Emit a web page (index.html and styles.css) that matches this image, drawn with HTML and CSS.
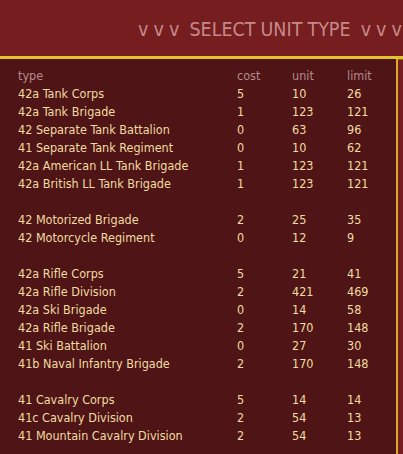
FILE: index.html
```html
<!DOCTYPE html>
<html>
<head>
<meta charset="utf-8">
<link rel="stylesheet" href="styles.css">
</head>
<body>
<div class="top">
  <div class="title">v v v&nbsp;&nbsp;SELECT UNIT TYPE&nbsp;&nbsp;v v v</div>
</div>
<div class="panel">
  <div class="grid">
    <div class="hd">type</div><div class="hd">cost</div><div class="hd">unit</div><div class="hd">limit</div>
    <div>42a Tank Corps</div><div>5</div><div>10</div><div>26</div>
    <div>42a Tank Brigade</div><div>1</div><div>123</div><div>121</div>
    <div>42 Separate Tank Battalion</div><div>0</div><div>63</div><div>96</div>
    <div>41 Separate Tank Regiment</div><div>0</div><div>10</div><div>62</div>
    <div>42a American LL Tank Brigade</div><div>1</div><div>123</div><div>121</div>
    <div>42a British LL Tank Brigade</div><div>1</div><div>123</div><div>121</div>
    <div class="gap"></div>
    <div>42 Motorized Brigade</div><div>2</div><div>25</div><div>35</div>
    <div>42 Motorcycle Regiment</div><div>0</div><div>12</div><div>9</div>
    <div class="gap"></div>
    <div>42a Rifle Corps</div><div>5</div><div>21</div><div>41</div>
    <div>42a Rifle Division</div><div>2</div><div>421</div><div>469</div>
    <div>42a Ski Brigade</div><div>0</div><div>14</div><div>58</div>
    <div>42a Rifle Brigade</div><div>2</div><div>170</div><div>148</div>
    <div>41 Ski Battalion</div><div>0</div><div>27</div><div>30</div>
    <div>41b Naval Infantry Brigade</div><div>2</div><div>170</div><div>148</div>
    <div class="gap"></div>
    <div>41 Cavalry Corps</div><div>5</div><div>14</div><div>14</div>
    <div>41c Cavalry Division</div><div>2</div><div>54</div><div>13</div>
    <div>41 Mountain Cavalry Division</div><div>2</div><div>54</div><div>13</div>
  </div>
</div>
</body>
</html>
```
FILE: styles.css
```css
html, body {
  margin: 0;
  padding: 0;
  background: #761d20;
  height: 100%;
  overflow: hidden;
}
body {
  font-family: "DejaVu Sans Condensed", "DejaVu Sans", sans-serif;
}
.top {
  height: 56px;
  border-bottom: 3px solid #e2c22e;
  box-shadow: 0 1px 0 #8a6a10;
  overflow: hidden;
}
.title {
  padding: 18px 0 0 138px;
  white-space: nowrap;
  font-size: 19.5px;
  line-height: 24px;
  word-spacing: -0.5px;
  color: #c68a8a;
}
.panel {
  margin-right: 5px;
  border-right: 2px solid #d9ad2a;
  background: #4e1416;
  height: calc(100% - 59px);
  padding-top: 8px;
  box-sizing: border-box;
}
.grid {
  display: grid;
  grid-template-columns: 219px 55px 55px auto;
  padding-left: 18px;
  font-size: 12.5px;
  line-height: 18px;
  color: #f2dca2;
  white-space: nowrap;
}
.hd {
  color: #b48c8c;
}
.gap {
  grid-column: 1 / -1;
  height: 18px;
}
```
